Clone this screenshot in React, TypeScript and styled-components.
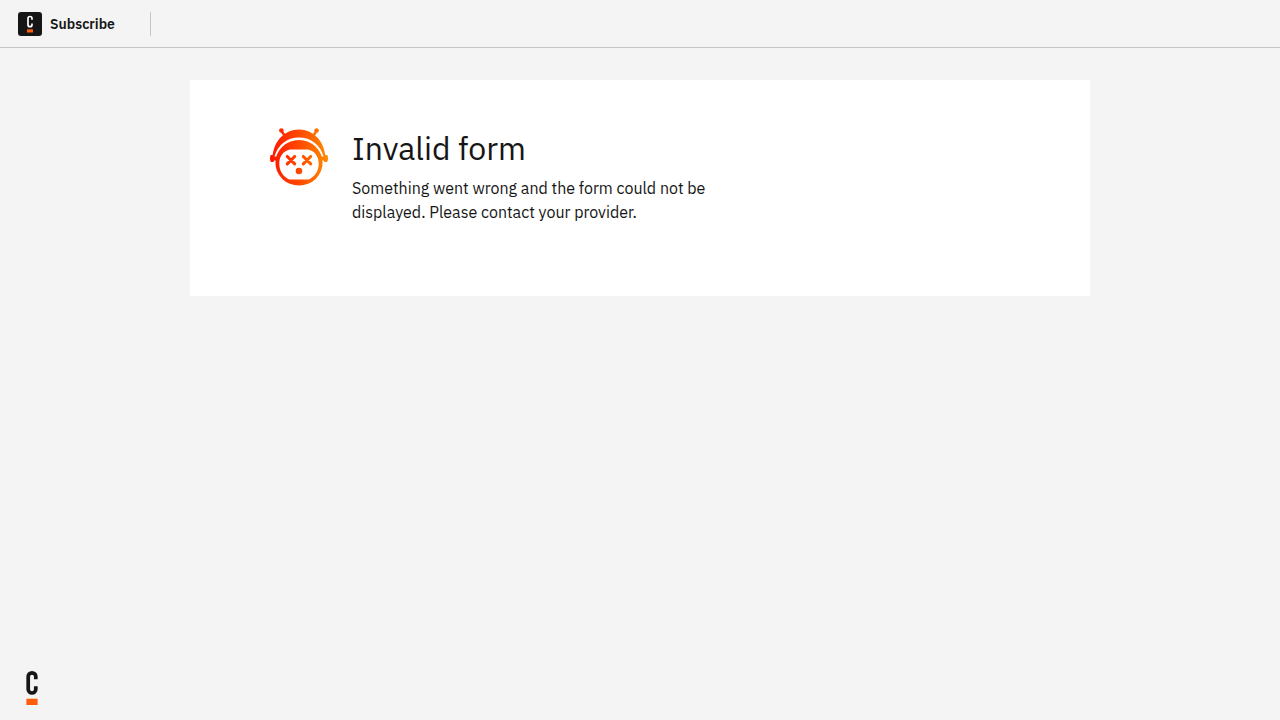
import React from "react";
import styled, { createGlobalStyle } from "styled-components";

const GlobalStyle = createGlobalStyle`
  *, *::before, *::after { box-sizing: border-box; }
  body {
    margin: 0;
    background: #f4f4f4;
    color: #161616;
    font-family: "IBM Plex Sans", Roboto, "Liberation Sans", sans-serif;
    -webkit-font-smoothing: antialiased;
    text-rendering: optimizeLegibility;
  }
`;

const Page = styled.div`
  display: flex;
  flex-direction: column;
  min-height: 100vh;
`;

const Header = styled.header`
  display: flex;
  align-items: center;
  height: 48px;
  padding: 0 18px;
  border-bottom: 1px solid #c6c6c6;
`;

const Brand = styled.div`
  display: flex;
  align-items: center;
  gap: 8px;
  padding-right: 35px;
  border-right: 1px solid #c6c6c6;
`;

const BrandName = styled.span`
  font-size: 14px;
  line-height: 24px;
  font-weight: 600;
`;

const Main = styled.main`
  flex: 1;
  padding: 32px 16px;
`;

const Card = styled.section`
  display: flex;
  align-items: flex-start;
  gap: 24px;
  max-width: 900px;
  min-height: 216px;
  margin: 0 auto;
  padding: 48px 80px;
  background: #fff;
`;

const Message = styled.div`
  max-width: 384px;
`;

const Title = styled.h1`
  margin: 0 0 8px;
  font-size: 32px;
  line-height: 40px;
  font-weight: 400;
`;

const Text = styled.p`
  margin: 0;
  font-size: 16px;
  line-height: 24px;
`;

const Footer = styled.footer`
  display: flex;
  padding: 0 26px 15px;
`;

const Icon = styled.svg`
  display: block;
  flex: none;
`;

function BrandIcon() {
  return (
    <Icon width="24" height="24" viewBox="0 0 24 24" aria-hidden="true">
      <rect width="24" height="24" rx="3" fill="#161616" />
      <path d="M14 7.800V6.500a2 2 0 0 0-4 0v6.200a2 2 0 0 0 4 0V11.400" fill="none" stroke="#fff" strokeWidth="1.700" />
      <rect x="9" y="17.300" width="6" height="3.200" fill="#fc5d0d" />
    </Icon>
  );
}

function FooterLogo() {
  return (
    <Icon width="12" height="35" viewBox="0 0 12 35" role="img" aria-label="Camunda">
      <path d="M9.800 9.300V6.600a3.800 3.800 0 0 0-7.600 0v12.600a3.800 3.800 0 0 0 7.600 0v-2.900" fill="none" stroke="#161616" strokeWidth="3.700" />
      <rect x="0.400" y="28.700" width="11.200" height="6.300" fill="#fc5d0d" />
    </Icon>
  );
}

function RobotFace() {
  return (
    <Icon width="58" height="58" viewBox="0 0 58 58" aria-hidden="true">
      <defs>
        <linearGradient id="face" gradientUnits="userSpaceOnUse" x1="0" y1="29" x2="58" y2="29">
          <stop offset="0" stopColor="#ff1500" />
          <stop offset="0.500" stopColor="#ff4800" />
          <stop offset="1" stopColor="#ff8c00" />
        </linearGradient>
      </defs>
      <g fill="url(#face)">
        <path d="M2.500 28.500C4 13 14.500 1.500 29 1.500S54 13 55.500 28.500H53.500C50.500 17 41 9.500 29 9.500S7.500 17 4.500 28.500Z" />
        <path
          fillRule="evenodd"
          d="M29 12A23.600 22.800 0 0 1 29 57.600A23.600 22.800 0 0 1 29 12ZM20 21.500C13.500 23 9.300 28 9.300 35.500C9.300 43.500 13.500 49 19.500 51.600H38.500C44.500 49 48.700 43.500 48.700 35.500C48.700 28 44.500 23 38 21.500Z"
        />
        <path d="M0.800 27H4.200V28.600H7V32.400H4.400L3.400 34H1C0.300 33.300 0 32 0 30.500S0.200 27.800 0.800 27Z" />
        <path d="M57.200 27H53.800V28.600H51V32.400H53.600L54.600 34H57C57.700 33.300 58 32 58 30.500S57.800 27.800 57.200 27Z" />
        <circle cx="11.400" cy="2.500" r="2.300" />
        <circle cx="46.600" cy="2.500" r="2.300" />
        <circle cx="29" cy="43" r="3.300" />
      </g>
      <g fill="none" stroke="url(#face)" strokeLinecap="round">
        <path strokeWidth="2.400" d="M11.400 3l3.600 5M46.600 3l-3.600 5" />
        <path strokeWidth="3.100" d="M17.300 28.500l7.400 7.400M24.700 28.500l-7.400 7.400M33.300 28.500l7.400 7.400M40.700 28.500l-7.400 7.400" />
      </g>
    </Icon>
  );
}

export default function App() {
  return (
    <Page>
      <GlobalStyle />
      <Header>
        <Brand>
          <BrandIcon />
          <BrandName>Subscribe</BrandName>
        </Brand>
      </Header>
      <Main>
        <Card>
          <RobotFace />
          <Message>
            <Title>Invalid form</Title>
            <Text>Something went wrong and the form could not be displayed. Please contact your provider.</Text>
          </Message>
        </Card>
      </Main>
      <Footer>
        <FooterLogo />
      </Footer>
    </Page>
  );
}
